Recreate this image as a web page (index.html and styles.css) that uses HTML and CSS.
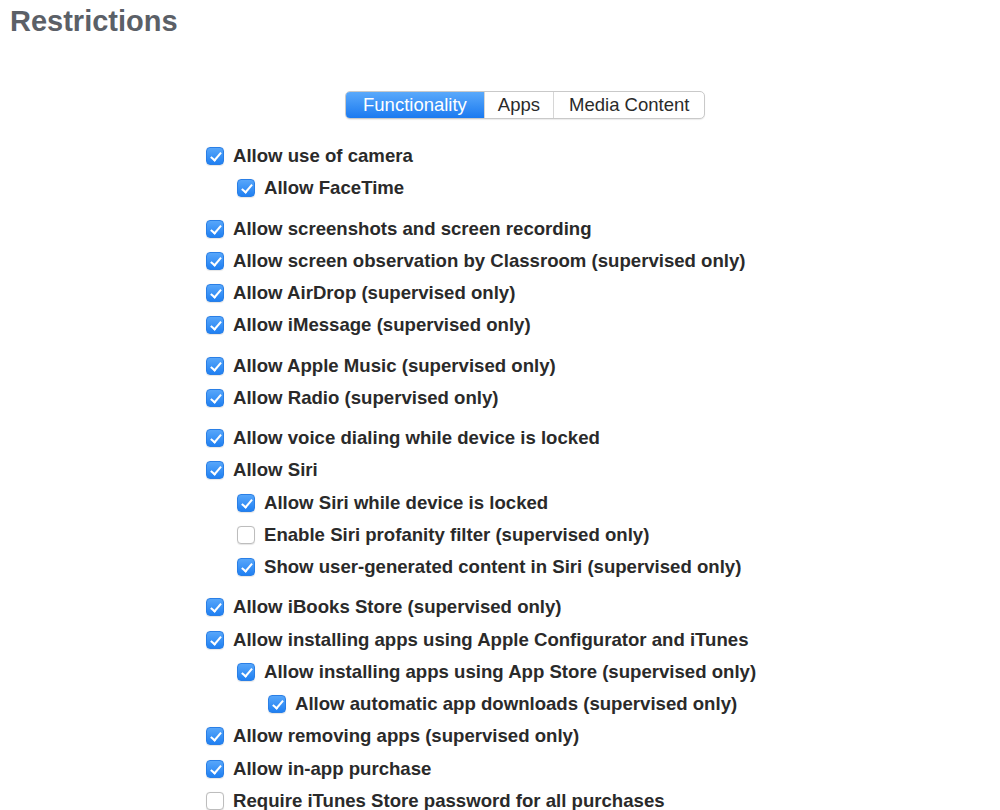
FILE: index.html
```html
<!DOCTYPE html>
<html>
<head>
<meta charset="utf-8">
<link rel="stylesheet" href="styles.css">
</head>
<body>
<h1 class="title">Restrictions</h1>
<div class="tabs">
  <div class="seg seg-active">Functionality</div>
  <div class="seg">Apps</div>
  <div class="seg seg-last">Media Content</div>
</div>
<div class="list">
  <div class="group">
    <div class="row"><span class="cb on"></span>Allow use of camera</div>
    <div class="row l1"><span class="cb on"></span>Allow FaceTime</div>
  </div>
  <div class="group">
    <div class="row"><span class="cb on"></span>Allow screenshots and screen recording</div>
    <div class="row"><span class="cb on"></span>Allow screen observation by Classroom (supervised only)</div>
    <div class="row"><span class="cb on"></span>Allow AirDrop (supervised only)</div>
    <div class="row"><span class="cb on"></span>Allow iMessage (supervised only)</div>
  </div>
  <div class="group">
    <div class="row"><span class="cb on"></span>Allow Apple Music (supervised only)</div>
    <div class="row"><span class="cb on"></span>Allow Radio (supervised only)</div>
  </div>
  <div class="group">
    <div class="row"><span class="cb on"></span>Allow voice dialing while device is locked</div>
    <div class="row"><span class="cb on"></span>Allow Siri</div>
    <div class="row l1"><span class="cb on"></span>Allow Siri while device is locked</div>
    <div class="row l1"><span class="cb"></span>Enable Siri profanity filter (supervised only)</div>
    <div class="row l1"><span class="cb on"></span>Show user-generated content in Siri (supervised only)</div>
  </div>
  <div class="group">
    <div class="row"><span class="cb on"></span>Allow iBooks Store (supervised only)</div>
    <div class="row"><span class="cb on"></span>Allow installing apps using Apple Configurator and iTunes</div>
    <div class="row l1"><span class="cb on"></span>Allow installing apps using App Store (supervised only)</div>
    <div class="row l2"><span class="cb on"></span>Allow automatic app downloads (supervised only)</div>
    <div class="row"><span class="cb on"></span>Allow removing apps (supervised only)</div>
    <div class="row"><span class="cb on"></span>Allow in-app purchase</div>
    <div class="row"><span class="cb"></span>Require iTunes Store password for all purchases</div>
  </div>
</div>
</body>
</html>
```
FILE: styles.css
```css
html, body {
  margin: 0;
  padding: 0;
  background: #ffffff;
  font-family: "Liberation Sans", Arial, sans-serif;
  overflow: hidden;
}
.title {
  margin: 0;
  padding: 4px 0 0 10px;
  font-size: 29px;
  line-height: 34px;
  font-weight: bold;
  color: #5b6067;
}
.tabs {
  display: flex;
  margin: 53px 0 0 345px;
  width: max-content;
  border: 1px solid #c9c9c9;
  border-radius: 5px;
  background: #fff;
  box-shadow: 0 1px 1px rgba(0,0,0,0.08);
  overflow: hidden;
}
.seg {
  height: 26px;
  line-height: 26px;
  padding: 0 13px;
  font-size: 18.5px;
  color: #2a2a2a;
  border-left: 1px solid #d6d6d6;
}
.seg:first-child { border-left: none; padding: 0 17px; }
.seg-last { padding: 0 15px; }
.seg-active {
  background: linear-gradient(#5aa9fb, #1b7af0);
  color: #fff;
}
.list {
  margin: 21px 0 0 206px;
}
.group { margin-bottom: 8px; }
.row {
  display: flex;
  align-items: center;
  height: 32.25px;
  font-size: 18.6px;
  font-weight: bold;
  color: #2a2a2a;
  white-space: nowrap;
}
.l1 { padding-left: 31px; }
.l2 { padding-left: 62px; }
.cb {
  position: relative;
  flex: none;
  width: 18px;
  height: 18px;
  box-sizing: border-box;
  margin-right: 9px;
  border-radius: 4px;
  border: 1px solid #bdbdbd;
  background: #fff;
  box-shadow: 0 0.5px 1px rgba(0,0,0,0.1);
}
.cb.on {
  border: 1px solid #2a7fe6;
  background: linear-gradient(#57a6fa, #2080f2);
}
.cb.on::after {
  content: "";
  position: absolute;
  left: 5.5px;
  top: 2px;
  width: 4px;
  height: 9px;
  border-right: 2.4px solid #fff;
  border-bottom: 2.4px solid #fff;
  transform: rotate(40deg);
}
```
